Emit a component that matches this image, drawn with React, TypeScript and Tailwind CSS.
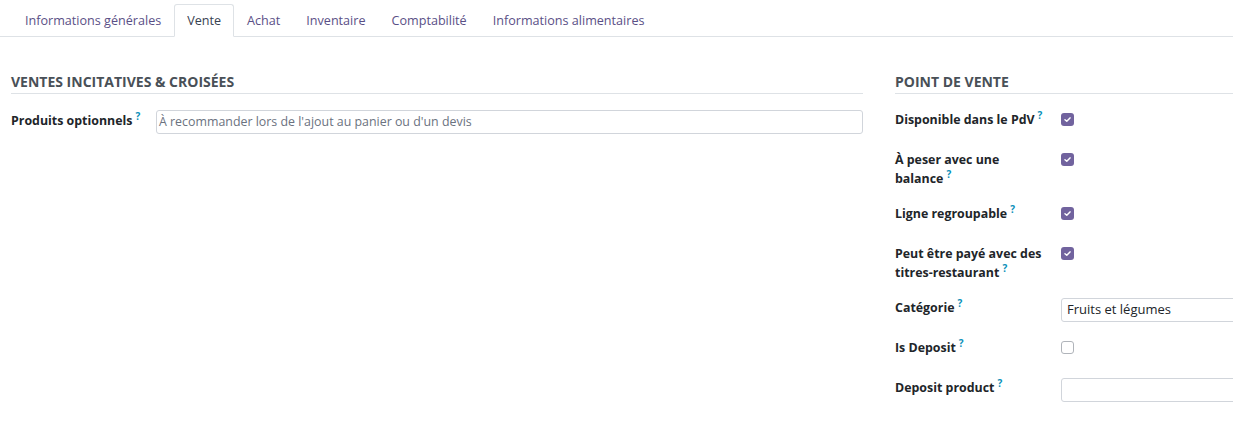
import React from "react";

const font = { fontFamily: '"Open Sans", "Liberation Sans", sans-serif' };

function Help() {
  return (
    <span className="relative top-[-5px] ml-[3px] text-[10px] font-bold leading-none text-[#0b8fb9]">?</span>
  );
}

function Check({ on }: { on: boolean }) {
  return on ? (
    <span className="mt-[3px] flex h-[13px] w-[13px] items-center justify-center rounded-[3px] bg-[#71639e]">
      <svg width="9" height="9" viewBox="0 0 10 10">
        <path d="M2.2 5.2 L4.2 7 L7.8 3.2" fill="none" stroke="white" strokeWidth="1.6" strokeLinecap="round" strokeLinejoin="round" />
      </svg>
    </span>
  ) : (
    <span className="mt-[3px] block h-[13px] w-[13px] rounded-[3px] border border-[#b0b4ba] bg-white" />
  );
}

function Row({ label, children }: { label: React.ReactNode; children: React.ReactNode }) {
  return (
    <div className="mb-4 flex min-h-[24px]">
      <div className="w-[166px] shrink-0 pr-2 text-[12.4px] font-bold leading-[19px] text-[#212529]">{label}</div>
      <div className="flex-1">{children}</div>
    </div>
  );
}

export default function App() {
  const tabs = ["Informations générales", "Vente", "Achat", "Inventaire", "Comptabilité", "Informations alimentaires"];
  return (
    <div className="h-[424px] w-[1233px] overflow-hidden bg-white" style={font}>
      <div className="flex h-[37px] items-end border-b border-[#dee2e6] pl-3">
        {tabs.map((t) =>
          t === "Vente" ? (
            <div
              key={t}
              className="mb-[-1px] flex h-[33px] items-center rounded-t-[3px] border border-b-white border-[#dee2e6] bg-white px-3 pt-[1px] text-[12.6px] text-[#374151]"
            >
              {t}
            </div>
          ) : (
            <div key={t} className="flex h-[32px] items-center border border-transparent px-3 pt-[2px] text-[12.6px] text-[#5a4f86]">
              {t}
            </div>
          )
        )}
      </div>

      <div className="flex pl-[11px] pt-[35px]">
        <div className="w-[852px] shrink-0">
          <div className="mb-[16px] border-b border-[#dee2e6] pb-[2px] text-[14px] font-bold leading-[19px] text-[#495057]">
            VENTES INCITATIVES &amp; CROISÉES
          </div>
          <div className="flex min-h-[24px]">
            <div className="w-[145px] shrink-0 pt-[1px] text-[12.4px] font-bold leading-[19px] text-[#212529]">
              Produits optionnels<Help />
            </div>
            <div className="flex h-[24px] flex-1 items-center rounded-[3px] border border-[#d1d5db] pl-[2px] text-[12.4px] text-[#6b7280]">
              À recommander lors de l'ajout au panier ou d'un devis
            </div>
          </div>
        </div>

        <div className="ml-[32px] w-[420px] shrink-0">
          <div className="mb-[16px] border-b border-[#dee2e6] pb-[2px] text-[14px] font-bold leading-[19px] text-[#495057]">
            POINT DE VENTE
          </div>
          <Row label={<>Disponible dans le PdV<Help /></>}>
            <Check on />
          </Row>
          <Row label={<>À peser avec une balance<Help /></>}>
            <Check on />
          </Row>
          <Row label={<>Ligne regroupable<Help /></>}>
            <Check on />
          </Row>
          <Row label={<>Peut être payé avec des titres-restaurant<Help /></>}>
            <Check on />
          </Row>
          <Row label={<>Catégorie<Help /></>}>
            <div className="flex h-[24px] items-center rounded-[3px] border border-[#d1d5db] pl-[5px] text-[13px] text-[#212529]">
              Fruits et légumes
            </div>
          </Row>
          <Row label={<>Is Deposit<Help /></>}>
            <Check on={false} />
          </Row>
          <Row label={<>Deposit product<Help /></>}>
            <div className="h-[24px] rounded-[3px] border border-[#d1d5db]" />
          </Row>
        </div>
      </div>
    </div>
  );
}
